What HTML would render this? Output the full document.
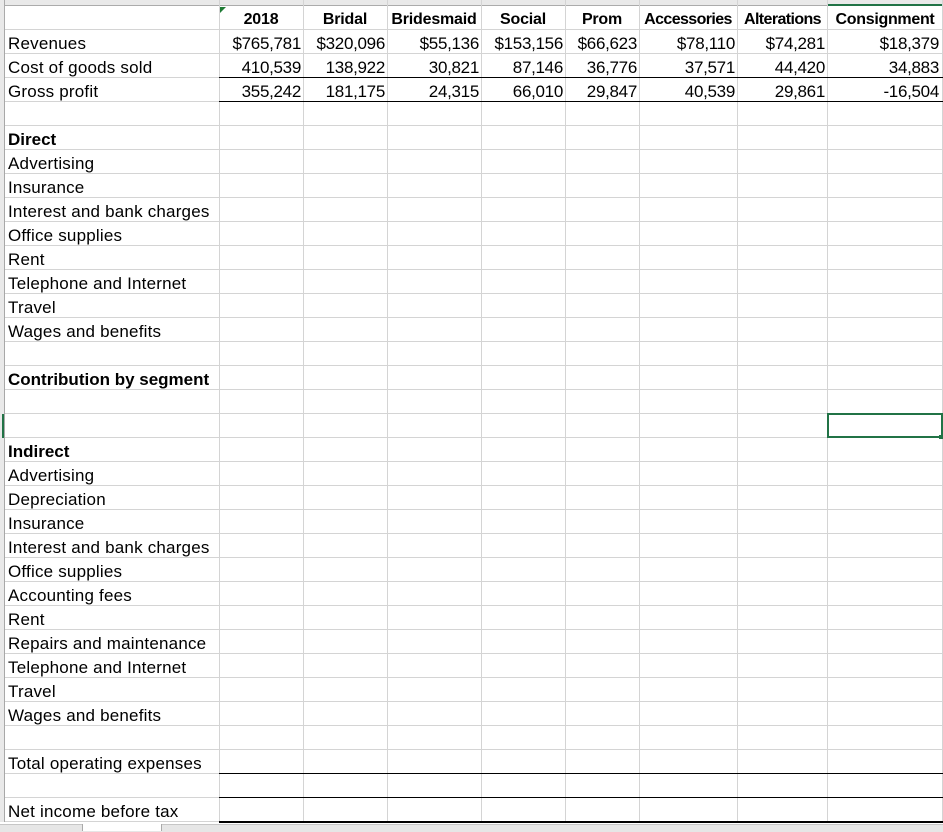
<!DOCTYPE html>
<html><head><meta charset="utf-8"><style>
html,body{margin:0;padding:0;width:943px;height:831px;overflow:hidden;background:#fff;font-family:"Liberation Sans",Arial,sans-serif;font-size:17px;color:#000}
.grid{position:absolute;left:0;top:6px;width:943px;height:816px;
background-image:repeating-linear-gradient(to bottom,transparent 0,transparent 23px,#d4d4d4 23px,#d4d4d4 24px);}
.v{position:absolute;top:0;width:1px;height:822px;background:#d4d4d4}
.hd{position:absolute;left:0;top:0;width:943px;height:6px;background:#e9e9e9;border-bottom:1px solid #ababab;box-sizing:border-box}
.rh{position:absolute;left:0;top:0;width:4px;height:822px;background:#e9e9e9;border-right:1px solid #ababab}
.t{position:absolute;height:24px;line-height:28px;white-space:nowrap}
.l{left:8px;letter-spacing:0.2px}
.r{text-align:right;letter-spacing:-0.3px}
.c{text-align:center;font-weight:bold;font-size:16px;letter-spacing:-0.2px}
.b{font-weight:bold;font-size:17px;letter-spacing:0}
.hl{position:absolute;height:1px;background:#000;left:219px;width:724px}
</style></head><body>
<div class="grid"></div>
<div class="hd"></div>
<div class="rh"></div>
<div style="position:absolute;left:828px;top:4px;width:115px;height:2px;background:#217346"></div>
<div style="position:absolute;left:2px;top:414px;width:3px;height:24px;background:#217346"></div>
<div class="v" style="left:219px"></div>
<div class="v" style="left:303px"></div>
<div class="v" style="left:387px"></div>
<div class="v" style="left:481px"></div>
<div class="v" style="left:565px"></div>
<div class="v" style="left:639px"></div>
<div class="v" style="left:737px"></div>
<div class="v" style="left:827px"></div>
<div class="v" style="left:942px"></div>
<div style="position:absolute;left:4px;top:30px;width:1px;height:792px;background:#a8a8a8"></div>
<svg style="position:absolute;left:220px;top:7px" width="6" height="6"><polygon points="0,0 6,0 0,6" fill="#1e7b34"/></svg>

<div class="t c" style="left:219px;width:84px;top:6px">2018</div>
<div class="t c" style="left:303px;width:84px;top:6px">Bridal</div>
<div class="t c" style="left:387px;width:94px;top:6px">Bridesmaid</div>
<div class="t c" style="left:481px;width:84px;top:6px">Social</div>
<div class="t c" style="left:565px;width:74px;top:6px">Prom</div>
<div class="t c" style="left:636px;width:104px;top:6px;letter-spacing:-0.6px">Accessories</div>
<div class="t c" style="left:735px;width:95px;top:6px;letter-spacing:-0.6px">Alterations</div>
<div class="t c" style="left:826px;width:118px;top:6px;letter-spacing:-0.3px">Consignment</div>

<div class="t l" style="top:30px">Revenues</div>
<div class="t l" style="top:54px">Cost of goods sold</div>
<div class="t l" style="top:78px">Gross profit</div>

<div class="t r" style="left:215px;width:86px;top:30px">$765,781</div>
<div class="t r" style="left:299px;width:86px;top:30px">$320,096</div>
<div class="t r" style="left:387px;width:92px;top:30px">$55,136</div>
<div class="t r" style="left:477px;width:86px;top:30px">$153,156</div>
<div class="t r" style="left:561px;width:76px;top:30px">$66,623</div>
<div class="t r" style="left:639px;width:96px;top:30px">$78,110</div>
<div class="t r" style="left:737px;width:88px;top:30px">$74,281</div>
<div class="t r" style="left:827px;width:112px;top:30px">$18,379</div>

<div class="t r" style="left:219px;width:82px;top:54px">410,539</div>
<div class="t r" style="left:303px;width:82px;top:54px">138,922</div>
<div class="t r" style="left:387px;width:92px;top:54px">30,821</div>
<div class="t r" style="left:481px;width:82px;top:54px">87,146</div>
<div class="t r" style="left:565px;width:72px;top:54px">36,776</div>
<div class="t r" style="left:639px;width:96px;top:54px">37,571</div>
<div class="t r" style="left:737px;width:88px;top:54px">44,420</div>
<div class="t r" style="left:827px;width:112px;top:54px">34,883</div>

<div class="t r" style="left:219px;width:82px;top:78px">355,242</div>
<div class="t r" style="left:303px;width:82px;top:78px">181,175</div>
<div class="t r" style="left:387px;width:92px;top:78px">24,315</div>
<div class="t r" style="left:481px;width:82px;top:78px">66,010</div>
<div class="t r" style="left:565px;width:72px;top:78px">29,847</div>
<div class="t r" style="left:639px;width:96px;top:78px">40,539</div>
<div class="t r" style="left:737px;width:88px;top:78px">29,861</div>
<div class="t r" style="left:827px;width:112px;top:78px">-16,504</div>
<div class="hl" style="top:77px"></div>
<div class="hl" style="top:101px"></div>

<div class="t l b" style="top:126px">Direct</div>
<div class="t l" style="top:150px">Advertising</div>
<div class="t l" style="top:174px">Insurance</div>
<div class="t l" style="top:198px">Interest and bank charges</div>
<div class="t l" style="top:222px">Office supplies</div>
<div class="t l" style="top:246px">Rent</div>
<div class="t l" style="top:270px">Telephone and Internet</div>
<div class="t l" style="top:294px">Travel</div>
<div class="t l" style="top:318px">Wages and benefits</div>
<div class="t l b" style="top:366px">Contribution by segment</div>

<div class="t l b" style="top:438px">Indirect</div>
<div class="t l" style="top:462px">Advertising</div>
<div class="t l" style="top:486px">Depreciation</div>
<div class="t l" style="top:510px">Insurance</div>
<div class="t l" style="top:534px">Interest and bank charges</div>
<div class="t l" style="top:558px">Office supplies</div>
<div class="t l" style="top:582px">Accounting fees</div>
<div class="t l" style="top:606px">Rent</div>
<div class="t l" style="top:630px">Repairs and maintenance</div>
<div class="t l" style="top:654px">Telephone and Internet</div>
<div class="t l" style="top:678px">Travel</div>
<div class="t l" style="top:702px">Wages and benefits</div>
<div class="t l" style="top:750px">Total operating expenses</div>
<div class="t l" style="top:798px">Net income before tax</div>
<div class="hl" style="top:773px"></div>
<div class="hl" style="top:797px"></div>
<div class="hl" style="top:821px;height:2px"></div>

<div style="position:absolute;left:827px;top:413px;width:116px;height:25px;border:2px solid #217346;box-sizing:border-box"></div>
<div style="position:absolute;left:939px;top:435px;width:4px;height:4px;background:#217346"></div>

<div style="position:absolute;left:0;top:824px;width:943px;height:7px;background:#e6e6e6;border-top:1px solid #c6c6c6"></div>
<div style="position:absolute;left:82px;top:824px;width:78px;height:7px;background:#fff;border-left:1px solid #aaa;border-right:1px solid #aaa"></div>
</body></html>
